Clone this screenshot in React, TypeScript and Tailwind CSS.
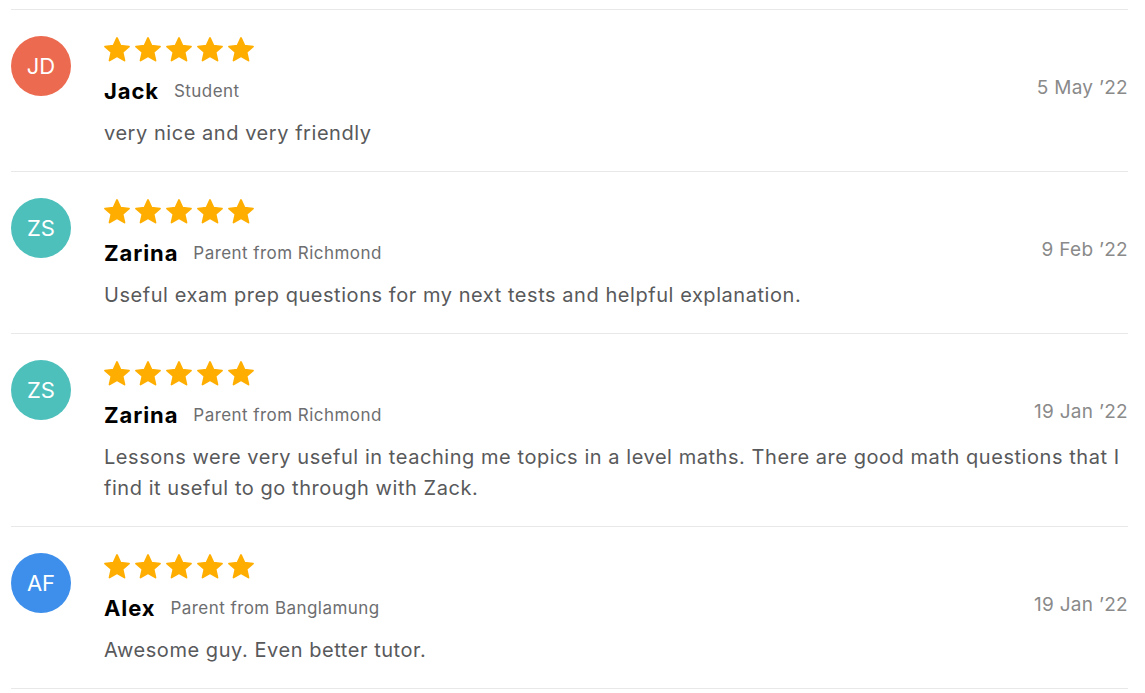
import React from "react";

type Review = {
  initials: string;
  color: string;
  name: string;
  role: string;
  date: string;
  text: string;
};

const reviews: Review[] = [
  { initials: "JD", color: "bg-[#ec6a4f]", name: "Jack", role: "Student", date: "5 May \u201922", text: "very nice and very friendly" },
  { initials: "ZS", color: "bg-[#4dc0bc]", name: "Zarina", role: "Parent from Richmond", date: "9 Feb \u201922", text: "Useful exam prep questions for my next tests and helpful explanation." },
  { initials: "ZS", color: "bg-[#4dc0bc]", name: "Zarina", role: "Parent from Richmond", date: "19 Jan \u201922", text: "Lessons were very useful in teaching me topics in a level maths. There are good math questions that I find it useful to go through with Zack." },
  { initials: "AF", color: "bg-[#3d8feb]", name: "Alex", role: "Parent from Banglamung", date: "19 Jan \u201922", text: "Awesome guy. Even better tutor." },
];

function Star() {
  return (
    <svg width="26" height="26" viewBox="1.4 1.4 21.2 21.2" aria-hidden="true">
      <path
        d="M12 2.2l2.9 6.3 6.9.7-5.2 4.6 1.5 6.8L12 17.1l-6.1 3.5 1.5-6.8-5.2-4.6 6.9-.7z"
        fill="#ffae00"
        stroke="#ffae00"
        strokeWidth="1.4"
        strokeLinejoin="round"
      />
    </svg>
  );
}

export default function App() {
  return (
    <div className="min-h-screen bg-white pl-[11px] pr-[17px] pt-[9px] font-['Inter',sans-serif]">
      {reviews.map((r, i) => (
        <div key={i} className="flex gap-[33px] border-t border-[#e8e8e8] pt-[26px] pb-[22px]">
          <div className={`flex h-[60px] w-[60px] shrink-0 items-center justify-center rounded-full ${r.color} text-[22px] text-white`}>
            {r.initials}
          </div>
          <div className="flex-1">
            <div className="mt-[1px] flex gap-[5px]">
              <Star />
              <Star />
              <Star />
              <Star />
              <Star />
            </div>
            <div className="mt-[13px] flex h-[30px] items-center">
              <span className="text-[22px] font-bold tracking-[0.9px] text-black">{r.name}</span>
              <span className="ml-[15px] mt-[2px] text-[17px] tracking-[0.45px] text-[#6d6e70]">{r.role}</span>
              <span className="mb-[6px] ml-auto text-[19px] tracking-[0.3px] text-[#8a8a8a]">{r.date}</span>
            </div>
            <p className="mt-[12px] text-[20px] leading-[31px] tracking-[0.55px] text-[#58595b]">{r.text}</p>
          </div>
        </div>
      ))}
      <div className="border-t border-[#e8e8e8]" />
    </div>
  );
}
